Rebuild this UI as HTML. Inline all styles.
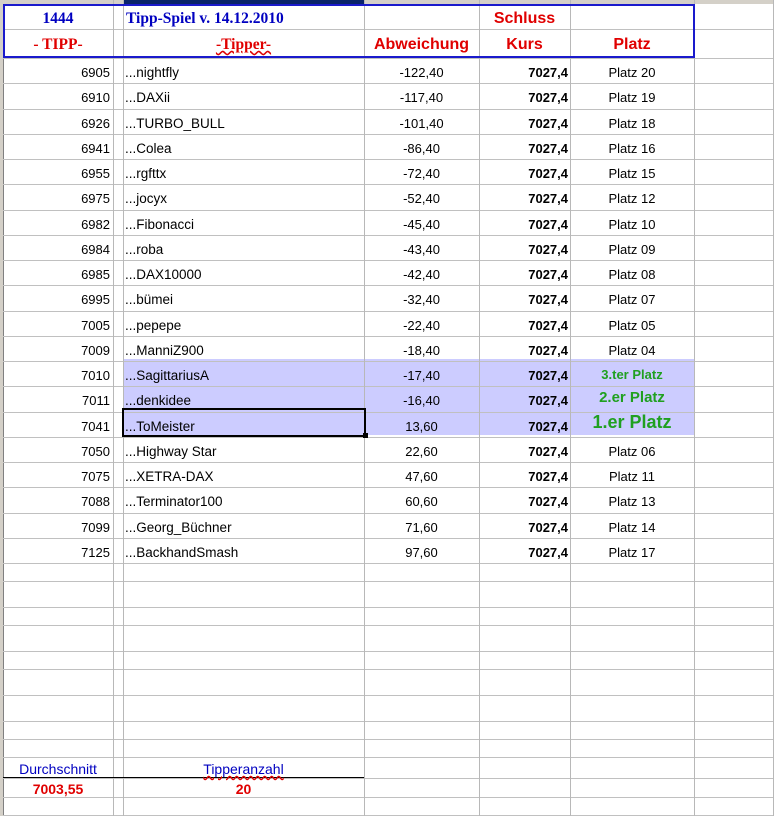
<!DOCTYPE html><html><head><style>
body{margin:0;width:775px;height:816px;overflow:hidden;background:#fff;position:relative;font-family:"Liberation Sans",Arial,sans-serif;font-size:13px}
.h{position:absolute;left:3px;width:771px;height:1px;background:#c0c0c0}
.v{position:absolute;top:0;height:816px;width:1px;background:#b8b8b8}
.t{position:absolute;white-space:nowrap;line-height:16px}
.r{text-align:right}.c{text-align:center}
.b{font-weight:bold}
.red{color:#e00000}.blue{color:#0000c0}.grn{color:#20a020;font-weight:bold}
.ser{font-family:"Liberation Serif",serif;font-weight:bold;font-size:15.5px}
</style></head><body>
<div style="position:absolute;left:0;top:0;width:3px;height:816px;background:#d4d0c8;border-right:1px solid #808080"></div>
<div style="position:absolute;left:3px;top:0;width:771px;height:4px;background:#d4d0c8"></div>
<div style="position:absolute;left:123px;top:0;width:241px;height:4px;background:#0a246a"></div>
<div style="position:absolute;left:123px;top:359px;width:571px;height:76px;background:#ccccff"></div>
<div id="g"></div>
<div class="v" style="left:113px"></div><div class="v" style="left:123px"></div><div class="v" style="left:364px"></div><div class="v" style="left:479px"></div><div class="v" style="left:570px"></div><div class="v" style="left:694px"></div><div class="v" style="left:773px"></div>
<div style="position:absolute;left:3px;top:4px;width:688px;height:50px;border:2px solid #1a1acc;background:transparent"></div>
<div style="position:absolute;left:3px;top:777px;width:361px;height:1px;background:#000"></div>
<div style="position:absolute;left:122px;top:408px;width:240px;height:25px;border:2px solid #000"></div>
<div style="position:absolute;left:363px;top:433px;width:5px;height:5px;background:#000"></div>
<div class="t ser blue c" style="left:3px;width:110px;top:11px">1444</div>
<div class="t ser blue" style="left:126px;top:11px">Tipp-Spiel v. 14.12.2010</div>
<div class="t ser red c" style="left:3px;width:110px;top:37px">- TIPP-</div>
<div class="t ser red c" style="left:123px;width:241px;top:37px;text-decoration:underline wavy #e00000">-Tipper-</div>
<div class="t b red c" style="left:364px;width:115px;top:37px;font-size:16px">Abweichung</div>
<div class="t b red c" style="left:479px;width:91px;top:11px;font-size:16px">Schluss</div>
<div class="t b red c" style="left:479px;width:91px;top:37px;font-size:16px">Kurs</div>
<div class="t b red c" style="left:570px;width:124px;top:37px;font-size:16px">Platz</div>
<div id="rows"></div>
<div class="t blue c" style="left:3px;width:110px;top:761px;font-size:14px">Durchschnitt</div>
<div class="t blue c" style="left:123px;width:241px;top:761px;font-size:14px;text-decoration:underline wavy #e00000">Tipperanzahl</div>
<div class="t b red c" style="left:3px;width:110px;top:781px;font-size:14px">7003,55</div>
<div class="t b red c" style="left:123px;width:241px;top:781px;font-size:14px">20</div>
<script>
var g='',ys=[29];
for(var i=0;i<=20;i++)ys.push(Math.round(58+25.25*i));
ys=ys.concat([581,607,625,651,669,695,721,739,757,778,797,815]);
ys.forEach(function(y){g+='<div class="h" style="top:'+y+'px"></div>'});
document.getElementById('g').innerHTML=g;
var d=[[6905,'nightfly','-122,40','Platz 20'],[6910,'DAXii','-117,40','Platz 19'],[6926,'TURBO_BULL','-101,40','Platz 18'],[6941,'Colea','-86,40','Platz 16'],[6955,'rgfttx','-72,40','Platz 15'],[6975,'jocyx','-52,40','Platz 12'],[6982,'Fibonacci','-45,40','Platz 10'],[6984,'roba','-43,40','Platz 09'],[6985,'DAX10000','-42,40','Platz 08'],[6995,'bümei','-32,40','Platz 07'],[7005,'pepepe','-22,40','Platz 05'],[7009,'ManniZ900','-18,40','Platz 04'],[7010,'SagittariusA','-17,40','3.ter Platz'],[7011,'denkidee','-16,40','2.er Platz'],[7041,'ToMeister','13,60','1.er Platz'],[7050,'Highway Star','22,60','Platz 06'],[7075,'XETRA-DAX','47,60','Platz 11'],[7088,'Terminator100','60,60','Platz 13'],[7099,'Georg_Büchner','71,60','Platz 14'],[7125,'BackhandSmash','97,60','Platz 17']];
var h='';
d.forEach(function(r,i){var y=Math.round(58+25.25*i)+7;
h+='<div class="t r" style="left:3px;width:107px;top:'+y+'px">'+r[0]+'</div>';
h+='<div class="t" style="left:125px;top:'+y+'px;font-size:13.5px">...'+r[1]+'</div>';
h+='<div class="t c" style="left:364px;width:115px;top:'+y+'px">'+r[2]+'</div>';
h+='<div class="t r b" style="left:479px;width:89px;top:'+y+'px">7027,4</div>';
var st='',cl='t c';
if(i==12){cl+=' grn';st='font-size:13px;top:'+(y-1)+'px;';}
else if(i==13){cl+=' grn';st='font-size:15px;top:'+(y-3)+'px;';}
else if(i==14){cl+=' grn';st='font-size:18px;top:'+(y-5)+'px;';}
h+='<div class="'+cl+'" style="left:570px;width:124px;top:'+y+'px;'+st+'">'+r[3]+'</div>';});
document.getElementById('rows').innerHTML=h;
</script>
</body></html>
